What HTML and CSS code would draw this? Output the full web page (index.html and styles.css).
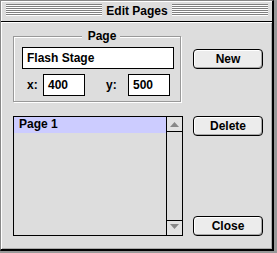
FILE: index.html
```html
<!DOCTYPE html>
<html>
<head>
<meta charset="utf-8">
<link rel="stylesheet" href="styles.css">
</head>
<body>
<div class="window">
  <div class="titlebar">
    <div class="stripes"></div>
    <div class="title">Edit Pages</div>
    <div class="stripes"></div>
  </div>
  <div class="content">
    <div class="group">
      <div class="group-label">Page</div>
      <div class="field field-wide">Flash Stage</div>
      <div class="coords">
        <div class="lbl lbl-x">x:</div>
        <div class="field field-small">400</div>
        <div class="lbl lbl-y">y:</div>
        <div class="field field-small">500</div>
      </div>
    </div>
    <div class="col-top">
      <div class="btn">New</div>
    </div>
    <div class="list">
      <div class="items">
        <div class="item selected">Page 1</div>
      </div>
      <div class="scrollbar">
        <div class="arrow arrow-up">
          <svg width="9" height="5" viewBox="0 0 9 5"><polygon points="4.5,0 9,5 0,5" fill="#888"/></svg>
        </div>
        <div class="track"></div>
        <div class="arrow arrow-down">
          <svg width="9" height="5" viewBox="0 0 9 5"><polygon points="0,0 9,0 4.5,5" fill="#888"/></svg>
        </div>
      </div>
    </div>
    <div class="col-bottom">
      <div class="btn">Delete</div>
      <div class="btn">Close</div>
    </div>
  </div>
</div>
</body>
</html>
```

FILE: styles.css
```css
html, body {
  margin: 0;
  padding: 0;
}
body {
  background: #999999;
  width: 277px;
  height: 253px;
  font-family: "Liberation Sans", Arial, sans-serif;
  font-size: 12px;
  font-weight: bold;
  color: #000;
}
.window {
  box-sizing: border-box;
  width: 274px;
  height: 251px;
  border-left: 1px solid #888;
  border-top: 1px solid #888;
  border-right: 2px solid #000;
  border-bottom: 2px solid #000;
  background: #dddddd;
  display: flex;
  flex-direction: column;
}
.titlebar {
  height: 20px;
  border-bottom: 1px solid #000;
  display: flex;
  align-items: flex-start;
  padding: 0 4px 0 5px;
  box-shadow: inset 1px 1px #fff;
  background: #dddddd;
}
.stripes {
  flex: 1;
  height: 12px;
  margin-top: 3px;
  background: repeating-linear-gradient(to bottom, #808080 0 1px, #ffffff 1px 2px);
}
.title {
  line-height: 20px;
  padding: 0 4px;
  white-space: nowrap;
}
.content {
  flex: 1;
  padding: 14px 0 0 12px;
  display: grid;
  grid-template-columns: 170px 70px;
  grid-template-rows: 66px 120px;
  column-gap: 10px;
  row-gap: 14px;
  box-shadow: inset 1px 1px #fff, inset -1px -1px #aaa;
}
.group {
  box-sizing: border-box;
  width: 168px;
  height: 66px;
  border: 1px solid #999;
  box-shadow: inset 1px 1px #fff, 1px 1px #fff;
  padding: 0 0 0 8px;
}
.group-label {
  width: fit-content;
  margin: -8px auto 0;
  padding: 0 4px 0 6px;
  line-height: 14px;
  background: #dddddd;
}
.field {
  box-sizing: border-box;
  height: 22px;
  border: 1px solid #000;
  background: #fff;
  line-height: 20px;
  padding-left: 4px;
}
.field-wide {
  width: 152px;
  margin-top: 4px;
}
.coords {
  display: flex;
  align-items: center;
  margin-top: 5px;
  height: 22px;
}
.lbl {
  line-height: 22px;
}
.lbl-x {
  width: 21px;
  padding-left: 5px;
  box-sizing: border-box;
}
.lbl-y {
  width: 22px;
  margin-left: 21px;
}
.field-small {
  width: 42px;
}
.col-top {
  padding-top: 13px;
}
.btn {
  box-sizing: border-box;
  width: 70px;
  height: 20px;
  border: 1px solid #000;
  border-radius: 4px;
  background: #ececec;
  box-shadow: inset 1px 1px #fff, inset -1px -1px #a8a8a8;
  text-align: center;
  line-height: 18px;
}
.col-bottom {
  display: flex;
  flex-direction: column;
  justify-content: space-between;
}
.list {
  box-sizing: border-box;
  width: 170px;
  height: 120px;
  border: 1px solid #000;
  display: flex;
  background: #dddddd;
}
.items {
  flex: 1;
}
.item {
  height: 16px;
  line-height: 14px;
  padding-left: 5px;
}
.selected {
  background: #ccccff;
}
.scrollbar {
  width: 15px;
  border-left: 1px solid #000;
  display: flex;
  flex-direction: column;
}
.arrow {
  height: 14px;
  display: flex;
  justify-content: center;
  background: #e2e2e2;
}
.arrow svg {
  display: block;
}
.arrow-up {
  border-bottom: 1px solid #000;
  align-items: flex-start;
  padding-top: 5px;
  box-sizing: content-box;
  height: 9px;
}
.arrow-down {
  border-top: 1px solid #000;
  align-items: flex-start;
  padding-top: 3px;
  box-sizing: content-box;
  height: 11px;
}
.track {
  flex: 1;
  background: #dddddd;
}
```
